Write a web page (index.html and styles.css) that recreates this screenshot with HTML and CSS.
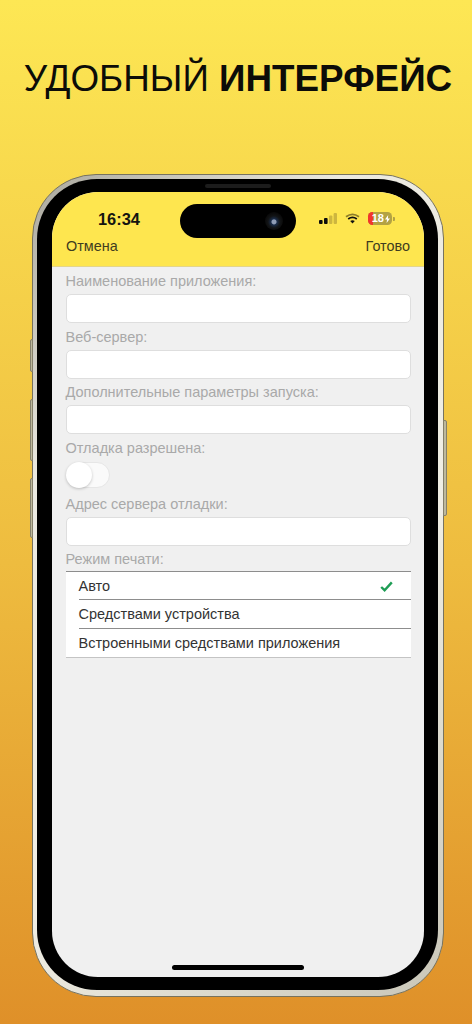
FILE: index.html
```html
<!DOCTYPE html>
<html lang="ru">
<head>
<meta charset="utf-8">
<title>Удобный интерфейс</title>
<link rel="stylesheet" href="styles.css">
</head>
<body>
<h1 class="headline">УДОБНЫЙ <b>ИНТЕРФЕЙС</b></h1>
<div class="phone">
  <span class="side-btn btn-a"></span>
  <span class="side-btn btn-b"></span>
  <span class="side-btn btn-c"></span>
  <span class="side-btn btn-d"></span>
  <div class="bezel">
    <span class="speaker"></span>
    <div class="screen">
      <header class="topbar">
        <div class="status">
          <span class="time">16:34</span>
          <div class="island"><span class="camera"></span></div>
          <div class="status-icons">
            <svg class="signal" width="18" height="11" viewBox="0 0 18 11">
              <rect x="0" y="7" width="3.6" height="4" rx="1" fill="#0c0c0c"/>
              <rect x="5" y="5" width="3.6" height="6" rx="1" fill="#0c0c0c"/>
              <rect x="10" y="2.5" width="3.4" height="8.5" rx="1" fill="#cdb63f"/>
              <rect x="14.6" y="0" width="3.4" height="11" rx="1" fill="#cdb63f"/>
            </svg>
            <svg class="wifi" width="15" height="11" viewBox="0 0 15 11">
              <path d="M1 3.8Q7.5 -1 14 3.8" fill="none" stroke="#8c7d2a" stroke-width="1.7"/>
              <path d="M3.2 6Q7.5 2.8 11.8 6" fill="none" stroke="#111" stroke-width="1.8"/>
              <path d="M5.2 8Q7.5 6.4 9.8 8L7.5 10.6Z" fill="#111"/>
            </svg>
            <div class="battery"><span class="battery-low"></span><span class="battery-num">18</span><svg class="bolt" width="5" height="8" viewBox="0 0 5 8"><path d="M3.2 0L0 4.5H2L1.6 8L5 3.4H2.9Z" fill="#fff"/></svg></div>
            <span class="battery-cap"></span>
          </div>
        </div>
        <nav class="actions"><span>Отмена</span><span>Готово</span></nav>
      </header>
      <main class="form">
        <label class="label">Наименование приложения:</label>
        <div class="input"></div>
        <label class="label">Веб-сервер:</label>
        <div class="input"></div>
        <label class="label">Дополнительные параметры запуска:</label>
        <div class="input"></div>
        <label class="label">Отладка разрешена:</label>
        <div class="toggle"><span class="knob"></span></div>
        <label class="label">Адрес сервера отладки:</label>
        <div class="input"></div>
        <label class="label label-tight">Режим печати:</label>
        <ul class="options">
          <li class="option">Авто
            <svg class="check" width="13" height="11" viewBox="0 0 13 11"><path d="M1.2 6L4.6 9.2L11.8 1.4" fill="none" stroke="#1f9d55" stroke-width="2.4"/></svg>
          </li>
          <li class="option">Средствами устройства</li>
          <li class="option">Встроенными средствами приложения</li>
        </ul>
      </main>
      <span class="home"></span>
    </div>
  </div>
</div>
</body>
</html>
```

FILE: styles.css
```css
* { box-sizing: border-box; }
html, body { margin: 0; padding: 0; }
body {
  width: 472px;
  height: 1024px;
  overflow: hidden;
  background: linear-gradient(180deg, #fde754 0%, #eebc3f 55%, #df9029 100%);
  font-family: "Liberation Sans", Arial, sans-serif;
  display: flex;
  flex-direction: column;
  align-items: center;
}
.headline {
  margin: 57px 0 0 4px;
  height: 117px;
  font-size: 36.8px;
  line-height: 44px;
  font-weight: 400;
  color: #0c0c08;
  white-space: nowrap;
}
.headline b { font-weight: 700; }
.phone {
  position: relative;
  width: 412px;
  height: 823px;
  margin-left: 4px;
  padding: 4px 5px 6px 4px;
  border-radius: 64px;
  background: linear-gradient(135deg, #a9a79d, #ebe9e0 25%, #f0eee4 60%, #c9c6b8);
  border: 1px solid #77735f;
}
.side-btn {
  position: absolute;
  width: 3.5px;
  background: #bdb89c;
  border: 1px solid #85806a;
}
.btn-a { left: -3.5px; top: 164px; height: 33px; border-radius: 2px 0 0 2px; }
.btn-b { left: -3.5px; top: 224px; height: 62px; border-radius: 2px 0 0 2px; }
.btn-c { left: -3.5px; top: 303px; height: 60px; border-radius: 2px 0 0 2px; }
.btn-d { right: -3.5px; top: 245px; height: 96px; border-radius: 0 2px 2px 0; }
.bezel {
  position: relative;
  height: 100%;
  padding: 13px 14px 13px 15px;
  background: #000;
  border-radius: 60px;
}
.speaker {
  position: absolute;
  top: 5px;
  left: 168px;
  width: 66px;
  height: 4px;
  border-radius: 2px;
  background: #1c1c1c;
}
.screen {
  position: relative;
  height: 100%;
  background: #f0f0f0;
  border-radius: 46px;
  overflow: hidden;
}
.topbar {
  height: 75px;
  background: #fee64f;
  border-bottom: 1px solid #e3d58d;
}
.status {
  display: flex;
  align-items: flex-start;
  height: 46px;
  padding: 12px 0 0 46px;
}
.time {
  width: 82px;
  margin-top: 6px;
  font-size: 16.4px;
  line-height: 18px;
  font-weight: 700;
  color: #141410;
}
.island {
  position: relative;
  width: 116px;
  height: 34px;
  border-radius: 17px;
  background: #000;
}
.camera {
  position: absolute;
  right: 13px;
  top: 8px;
  width: 18px;
  height: 18px;
  border-radius: 50%;
  background: radial-gradient(circle at 50% 55%, #8f9cb5 0 2px, #1b2d4a 3px, #121416 6px, #0a0a0a 9px);
}
.status-icons {
  display: flex;
  align-items: center;
  margin: 8px 0 0 23px;
}
.wifi { margin-left: 8px; }
.battery {
  position: relative;
  display: flex;
  align-items: center;
  justify-content: flex-end;
  gap: 1px;
  width: 24px;
  height: 13px;
  margin-left: 8px;
  padding-right: 2px;
  border-radius: 4.5px;
  background: #b3a243;
  overflow: hidden;
}
.battery-low {
  position: absolute;
  left: 0;
  top: 0;
  bottom: 0;
  width: 5px;
  background: #f2352c;
}
.battery-num {
  position: relative;
  font-size: 11px;
  line-height: 13px;
  font-weight: 700;
  color: #fff;
}
.bolt { position: relative; }
.battery-cap {
  width: 1.5px;
  height: 4px;
  margin-left: 1px;
  border-radius: 0 1px 1px 0;
  background: #b3a243;
}
.actions {
  display: flex;
  justify-content: space-between;
  padding: 0 14px;
  font-size: 14.4px;
  line-height: 17px;
  color: #3f3c20;
}
.form {
  display: flex;
  flex-direction: column;
  padding: 6px 13.5px 0;
}
.label {
  height: 21px;
  font-size: 14.5px;
  line-height: 17px;
  color: #a9a9a9;
}
.label-tight { height: 20px; }
.input {
  height: 29px;
  margin-bottom: 5.5px;
  background: #fff;
  border: 1px solid #dedede;
  border-radius: 5px;
}
.toggle {
  position: relative;
  width: 44px;
  height: 26px;
  margin: 1px 0 8px 0.5px;
  border-radius: 13px;
  background: #fafafa;
  border: 1px solid #e6e6e6;
}
.knob {
  position: absolute;
  left: -1px;
  top: -1px;
  width: 26px;
  height: 26px;
  border-radius: 50%;
  background: #fff;
  box-shadow: 0 1px 3px rgba(0,0,0,.22);
}
.options {
  margin: 0;
  padding: 0 0 0 13px;
  list-style: none;
  background: #fff;
  border-top: 1px solid #8d8d8d;
  border-bottom: 1px solid #c4c4c4;
}
.option {
  display: flex;
  align-items: center;
  justify-content: space-between;
  height: 28.3px;
  padding: 1px 18px 0 0;
  font-size: 14.5px;
  color: #333;
  border-bottom: 1px solid #8d8d8d;
}
.option:last-child { border-bottom: 0; }
.home {
  position: absolute;
  left: 120px;
  bottom: 7px;
  width: 132px;
  height: 5px;
  border-radius: 3px;
  background: #000;
}
```
